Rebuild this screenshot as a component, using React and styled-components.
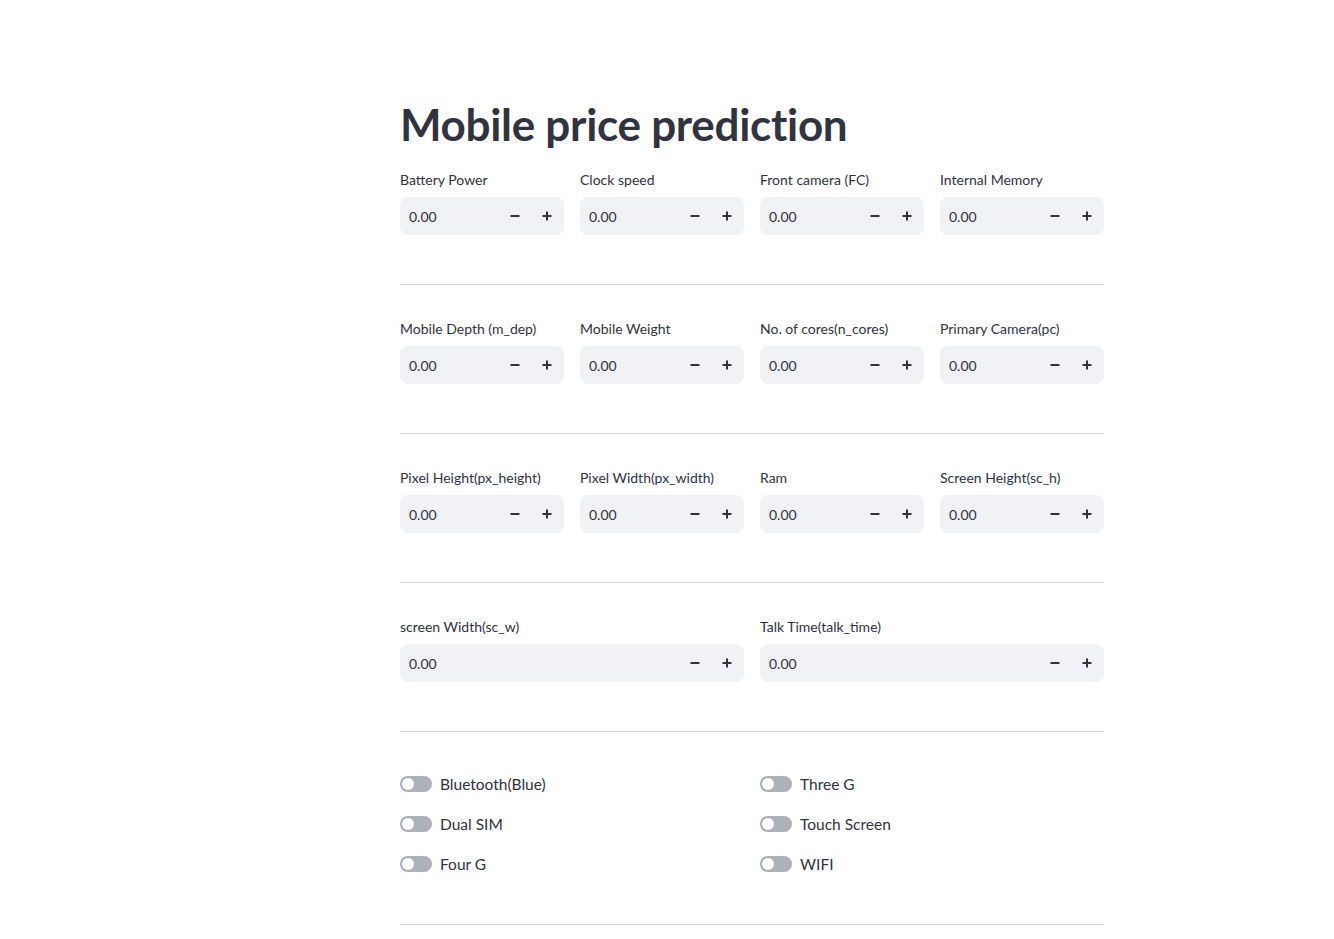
import styled, { createGlobalStyle } from 'styled-components'

const GlobalStyle = createGlobalStyle`
  html, body {
    margin: 0;
    padding: 0;
    background: #fff;
  }
  body {
    font-family: "Source Sans Pro", Lato, "Noto Sans", sans-serif;
    color: #31333f;
  }
`

const rows = [
  ['Battery Power', 'Clock speed', 'Front camera (FC)', 'Internal Memory'],
  ['Mobile Depth (m_dep)', 'Mobile Weight', 'No. of cores(n_cores)', 'Primary Camera(pc)'],
  ['Pixel Height(px_height)', 'Pixel Width(px_width)', 'Ram', 'Screen Height(sc_h)'],
  ['screen Width(sc_w)', 'Talk Time(talk_time)'],
]

const toggles = [
  ['Bluetooth(Blue)', 'Dual SIM', 'Four G'],
  ['Three G', 'Touch Screen', 'WIFI'],
]

function MinusIcon() {
  return (
    <svg width="10" height="10" viewBox="0 0 10 10">
      <rect x="0.5" y="4" width="9" height="2" fill="#31333f" />
    </svg>
  )
}

function PlusIcon() {
  return (
    <svg width="10" height="10" viewBox="0 0 10 10">
      <rect x="0.5" y="4" width="9" height="2" fill="#31333f" />
      <rect x="4" y="0.5" width="2" height="9" fill="#31333f" />
    </svg>
  )
}

function NumberField({ label }) {
  return (
    <Field>
      <Label>{label}</Label>
      <InputBox>
        <Value>0.00</Value>
        <StepButton><MinusIcon /></StepButton>
        <StepButton><PlusIcon /></StepButton>
      </InputBox>
    </Field>
  )
}

function App() {
  return (
    <>
      <GlobalStyle />
      <Main>
        <Title>Mobile price prediction</Title>
        {rows.map((row, i) => (
          <div key={i}>
            <Row cols={row.length}>
              {row.map((label) => (
                <NumberField key={label} label={label} />
              ))}
            </Row>
            <Divider />
          </div>
        ))}
        <ToggleGrid>
          {toggles.map((col, i) => (
            <ToggleColumn key={i}>
              {col.map((label) => (
                <ToggleRow key={label}>
                  <Track>
                    <Knob />
                  </Track>
                  <ToggleLabel>{label}</ToggleLabel>
                </ToggleRow>
              ))}
            </ToggleColumn>
          ))}
        </ToggleGrid>
        <LastDivider />
      </Main>
    </>
  )
}

export default App

const Main = styled.main`
  width: 704px;
  margin-left: 400px;
  padding-top: 96px;
`

const Title = styled.h1`
  margin: 0 0 16px;
  font-size: 44px;
  font-weight: 700;
  line-height: 57px;
  color: #31333f;
  letter-spacing: -0.3px;
`

const Row = styled.div`
  display: grid;
  grid-template-columns: repeat(${(p) => p.cols}, 1fr);
  gap: 16px;
`

const Field = styled.div`
  display: flex;
  flex-direction: column;
`

const Label = styled.label`
  font-size: 14px;
  line-height: 21px;
  height: 21px;
  margin-bottom: 7px;
  color: #31333f;
`

const InputBox = styled.div`
  box-sizing: border-box;
  display: flex;
  align-items: center;
  height: 38px;
  background: #f0f2f6;
  border: 1px solid #f0f2f6;
  border-radius: 8px;
`

const Value = styled.span`
  flex: 1;
  padding-left: 8px;
  font-size: 14px;
  color: #31333f;
`

const StepButton = styled.span`
  width: 32px;
  height: 36px;
  display: flex;
  align-items: center;
  justify-content: center;
`

const Divider = styled.hr`
  border: none;
  border-bottom: 1px solid rgba(49, 51, 63, 0.2);
  margin: 49px 0 33px;
`

const LastDivider = styled(Divider)`
  margin-top: 48px;
`

const ToggleGrid = styled.div`
  display: grid;
  grid-template-columns: 1fr 1fr;
  gap: 16px;
  padding-top: 7px;
`

const ToggleColumn = styled.div`
  display: flex;
  flex-direction: column;
  gap: 16px;
`

const ToggleRow = styled.div`
  display: flex;
  align-items: center;
  height: 24px;
  gap: 8px;
`

const Track = styled.div`
  position: relative;
  width: 32px;
  height: 16px;
  border-radius: 8px;
  background: #acb0b9;
`

const Knob = styled.div`
  box-sizing: border-box;
  position: absolute;
  left: 1px;
  top: 1px;
  width: 14px;
  height: 14px;
  border-radius: 50%;
  background: #fff;
  border: 1px solid #a3a7b0;
`

const ToggleLabel = styled.span`
  font-size: 15.5px;
  color: #31333f;
`
